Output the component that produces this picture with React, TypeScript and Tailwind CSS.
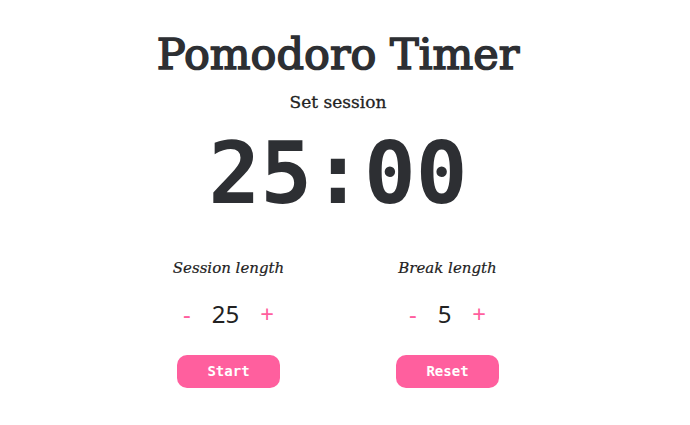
import { useState } from "react"

const slab = { fontFamily: '"DejaVu Serif", "Liberation Serif", serif' }
const mono = { fontFamily: '"DejaVu Sans Mono", "Liberation Mono", monospace' }
const sans = { fontFamily: '"Noto Sans", "Open Sans", sans-serif' }

function Counter({ label, value, onDec, onInc }: { label: string; value: number; onDec: () => void; onInc: () => void }) {
  return (
    <div className="flex flex-col items-center">
      <h3 className="text-[15px] italic text-[#222] leading-none whitespace-nowrap [-webkit-text-stroke:0.2px_#222]" style={slab}>
        {label}
      </h3>
      <div className="mt-[26px] flex items-center gap-[21px] text-[24px] leading-none" style={sans}>
        <button className="text-[#ff5f9e]" onClick={onDec}>-</button>
        <span className="text-[#222]">{value}</span>
        <button className="text-[#ff5f9e]" onClick={onInc}>+</button>
      </div>
    </div>
  )
}

export default function App() {
  const [session, setSession] = useState(25)
  const [brk, setBrk] = useState(5)

  return (
    <div className="w-[676px] min-h-[425px] bg-white flex flex-col items-center pt-[33px]">
      {/* heading */}
      <h1 className="text-[43px] text-[#2d2f33] leading-none [-webkit-text-stroke:1.6px_#2d2f33]" style={slab}>
        Pomodoro Timer
      </h1>
      <p className="mt-[18px] text-[17px] text-[#222] leading-none [-webkit-text-stroke:0.3px_#222]" style={slab}>
        Set session
      </p>
      <div className="mt-[19px] text-[86px] font-bold text-[#2d2f33] leading-none slashed-zero" style={mono}>
        {String(session).padStart(2, "0")}:00
      </div>

      {/* controls */}
      <div className="mt-[45px] grid grid-cols-2 gap-x-[116px]">
        <div className="flex flex-col items-center w-[103px]">
          <Counter label="Session length" value={session} onDec={() => setSession(s => Math.max(1, s - 1))} onInc={() => setSession(s => s + 1)} />
          <button className="mt-[29px] w-[103px] h-[33px] rounded-[10px] bg-[#ff5f9e] text-white text-[14px] font-bold" style={mono}>
            Start
          </button>
        </div>
        <div className="flex flex-col items-center w-[103px]">
          <Counter label="Break length" value={brk} onDec={() => setBrk(s => Math.max(1, s - 1))} onInc={() => setBrk(s => s + 1)} />
          <button className="mt-[29px] w-[103px] h-[33px] rounded-[10px] bg-[#ff5f9e] text-white text-[14px] font-bold" style={mono} onClick={() => { setSession(25); setBrk(5) }}>
            Reset
          </button>
        </div>
      </div>
    </div>
  )
}
